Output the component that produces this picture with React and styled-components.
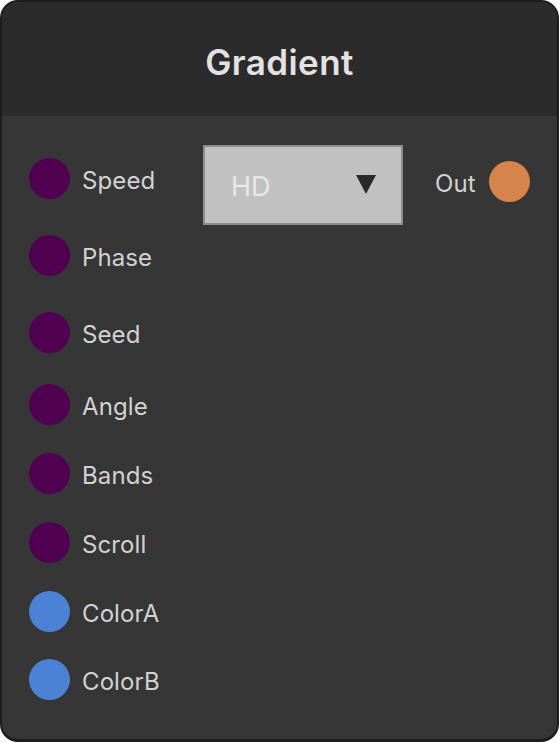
import React from "react";
import styled, { createGlobalStyle } from "styled-components";

const Global = createGlobalStyle`
  html, body { margin: 0; padding: 0; background: #ffffff; }
  body { font-family: Inter, "Noto Sans", sans-serif; }
`;

const Card = styled.div`
  box-sizing: border-box;
  width: 559px;
  height: 742px;
  border: 2px solid #1d1d1d;
  border-bottom-width: 3px;
  border-radius: 18px;
  overflow: hidden;
  display: flex;
  flex-direction: column;
  background: #363636;
`;

const Header = styled.div`
  height: 114px;
  flex: none;
  background: #2b2b2b;
  display: flex;
  align-items: center;
  justify-content: center;
`;

const Title = styled.h1`
  margin: 6px 0 0 0;
  font-size: 35px;
  font-weight: 600;
  color: #e2e2e2;
  letter-spacing: 0.4px;
`;

const Body = styled.div`
  flex: 1;
  display: flex;
  align-items: flex-start;
  padding: 0 0 0 27px;
`;

const Inputs = styled.div`
  display: flex;
  flex-direction: column;
  width: 174px;
  padding-top: 42px;
`;

const Row = styled.div`
  display: flex;
  align-items: center;
  gap: 12px;
  height: 41px;
  margin-top: ${(p) => p.$space}px;
`;

const Socket = styled.span`
  flex: none;
  width: 41px;
  height: 41px;
  border-radius: 50%;
  background: ${(p) => p.$color};
`;

const Label = styled.span`
  font-size: 24px;
  color: #d2d2d2;
  letter-spacing: 0.1px;
  padding-top: 3px;
`;

const Select = styled.div`
  box-sizing: border-box;
  margin-top: 29px;
  width: 200px;
  height: 80px;
  background: #c1c1c1;
  border: 2px solid #8c8c8c;
  display: flex;
  align-items: center;
  justify-content: space-between;
  padding: 2px 25px 0 26px;
`;

const SelectValue = styled.span`
  font-size: 27px;
  color: #e8e8e8;
`;

const Caret = styled.svg`
  width: 20px;
  height: 19px;
  margin-top: -4px;
`;

const Output = styled.div`
  display: flex;
  align-items: center;
  gap: 13px;
  margin-top: 45px;
  margin-left: 32px;
`;

const inputs = [
  { name: "Speed", color: "#4f0050", space: 0 },
  { name: "Phase", color: "#4f0050", space: 36 },
  { name: "Seed", color: "#4f0050", space: 36 },
  { name: "Angle", color: "#4f0050", space: 31 },
  { name: "Bands", color: "#4f0050", space: 28 },
  { name: "Scroll", color: "#4f0050", space: 28 },
  { name: "ColorA", color: "#4b82d6", space: 28 },
  { name: "ColorB", color: "#4b82d6", space: 27 },
];

export default function App() {
  return (
    <>
      <Global />
      <Card>
        <Header>
          <Title>Gradient</Title>
        </Header>
        <Body>
          <Inputs>
            {inputs.map((i) => (
              <Row key={i.name} $space={i.space}>
                <Socket $color={i.color} />
                <Label>{i.name}</Label>
              </Row>
            ))}
          </Inputs>
          <Select>
            <SelectValue>HD</SelectValue>
            <Caret viewBox="0 0 20 19">
              <polygon points="0,0 20,0 10,19" fill="#2a2a2a" />
            </Caret>
          </Select>
          <Output>
            <Label>Out</Label>
            <Socket $color="#d5854c" />
          </Output>
        </Body>
      </Card>
    </>
  );
}
